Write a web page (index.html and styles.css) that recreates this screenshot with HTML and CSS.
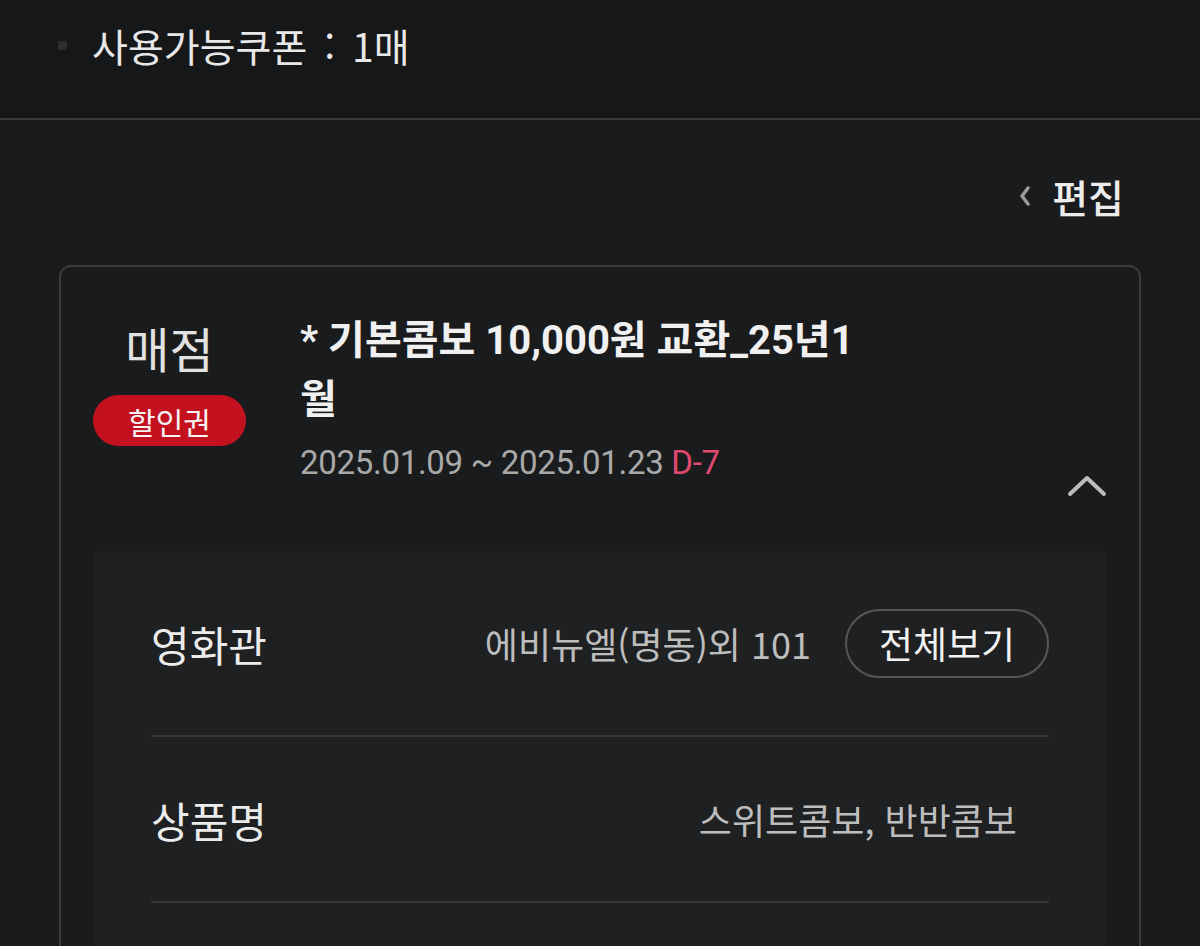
FILE: index.html
```html
<!DOCTYPE html>
<html lang="ko">
<head>
<meta charset="utf-8">
<link rel="stylesheet" href="styles.css">
</head>
<body>
<header class="header">
  <span class="bullet"></span>
  <span class="count">사용가능쿠폰 <span class="colon">:</span> 1매</span>
</header>
<div class="edit-row">
  <span class="edit">
    <svg class="edit-chev" width="14" height="22" viewBox="0 0 14 22"><path d="M10 3 L4 11 L10 19" fill="none" stroke="#9a9a9c" stroke-width="3.5" stroke-linecap="round" stroke-linejoin="round"/></svg>
    <span>편집</span>
  </span>
</div>
<section class="card">
  <div class="card-top">
    <div class="kind">
      <div class="kind-name">매점</div>
      <div class="pill">할인권</div>
    </div>
    <div class="info">
      <div class="title">* 기본콤보 10,000원 교환_25년1월</div>
      <div class="period">2025.01.09 ~ 2025.01.23 <span class="dday">D-7</span></div>
    </div>
    <svg class="toggle" width="40" height="24" viewBox="0 0 40 24"><path d="M3 20 L20 4 L37 20" fill="none" stroke="#bdbdbd" stroke-width="4" stroke-linecap="round" stroke-linejoin="round"/></svg>
  </div>
  <div class="detail">
    <div class="row">
      <div class="label">영화관</div>
      <div class="value-group">
        <span class="value">에비뉴엘(명동)외 101</span>
        <span class="btn">전체보기</span>
      </div>
    </div>
    <div class="row row-goods">
      <div class="label">상품명</div>
      <span class="value value-pad">스위트콤보, 반반콤보</span>
    </div>
    <div class="row row-empty"></div>
  </div>
</section>
</body>
</html>
```
FILE: styles.css
```css
* { box-sizing: border-box; }
html, body { margin: 0; padding: 0; }
body {
  background: #1a1b1d;
  color: #e6e6e6;
  font-family: "Noto Sans CJK KR", "Noto Sans", sans-serif;
  width: 1200px;
  height: 946px;
  overflow: hidden;
}
.header {
  height: 120px;
  border-bottom: 2px solid #3a3a3c;
  background: #161719;
  display: flex;
  align-items: center;
  padding: 0 0 28px 58px;
}
.bullet {
  width: 9px;
  height: 9px;
  background: #2c2d2f;
  border-radius: 2px;
  margin-right: 25px;
}
.count {
  font-size: 39px;
  line-height: 1;
  color: #e8e8e8;
}
.colon { margin: 0 6px; }
.edit-row {
  display: flex;
  justify-content: flex-end;
  padding: 7px 76px 0 0;
  height: 145px;
}
.edit {
  display: flex;
  align-items: center;
  gap: 20px;
  font-size: 39px;
  line-height: 52px;
  color: #ececec;
  font-weight: 500;
}
.card {
  margin: 0 59px;
  border: 2px solid #3b3c3e;
  border-bottom: none;
  border-radius: 12px 12px 0 0;
  background: #1a1b1d;
  padding: 0 32px;
  height: 700px;
}
.card-top {
  display: flex;
  padding-top: 44px;
  height: 284px;
  position: relative;
}
.kind {
  width: 153px;
  display: flex;
  flex-direction: column;
  align-items: center;
}
.kind-name {
  font-size: 48px;
  line-height: 72px;
  color: #e2e2e2;
}
.pill {
  margin-top: 12px;
  width: 153px;
  height: 51px;
  border-radius: 26px;
  background: #c4111f;
  color: #f4f4f4;
  font-size: 30px;
  display: flex;
  align-items: center;
  justify-content: center;
}
.info {
  margin-left: 54px;
  width: 575px;
}
.title {
  font-family: "Roboto", "Noto Sans CJK KR", sans-serif;
  font-weight: 700;
  font-size: 40px;
  line-height: 59px;
  color: #f0f0f0;
  margin-top: 0;
}
.period {
  font-family: "Roboto", "Noto Sans CJK KR", sans-serif;
  font-size: 33px;
  line-height: 44px;
  color: #a9a9a9;
  margin-top: 12px;
  letter-spacing: -0.3px;
}
.dday { color: #e0496f; }
.toggle {
  position: absolute;
  right: 0;
  top: 207px;
}
.detail {
  background: #1f2022;
  padding: 0 58px;
  height: 420px;
}
.row {
  display: flex;
  align-items: center;
  justify-content: space-between;
  height: 186px;
  border-bottom: 2px solid #333436;
}
.row-goods { height: 166px; }
.row-empty { border-bottom: none; }
.label {
  font-size: 42px;
  color: #ececec;
}
.value-group {
  display: flex;
  align-items: center;
  gap: 34px;
}
.value {
  font-size: 36px;
  color: #bdbdbd;
}
.value-pad { margin-right: 32px; }
.btn {
  width: 204px;
  height: 69px;
  border: 2px solid #555658;
  border-radius: 35px;
  display: flex;
  align-items: center;
  justify-content: center;
  font-size: 37px;
  color: #f2f2f2;
}
```
